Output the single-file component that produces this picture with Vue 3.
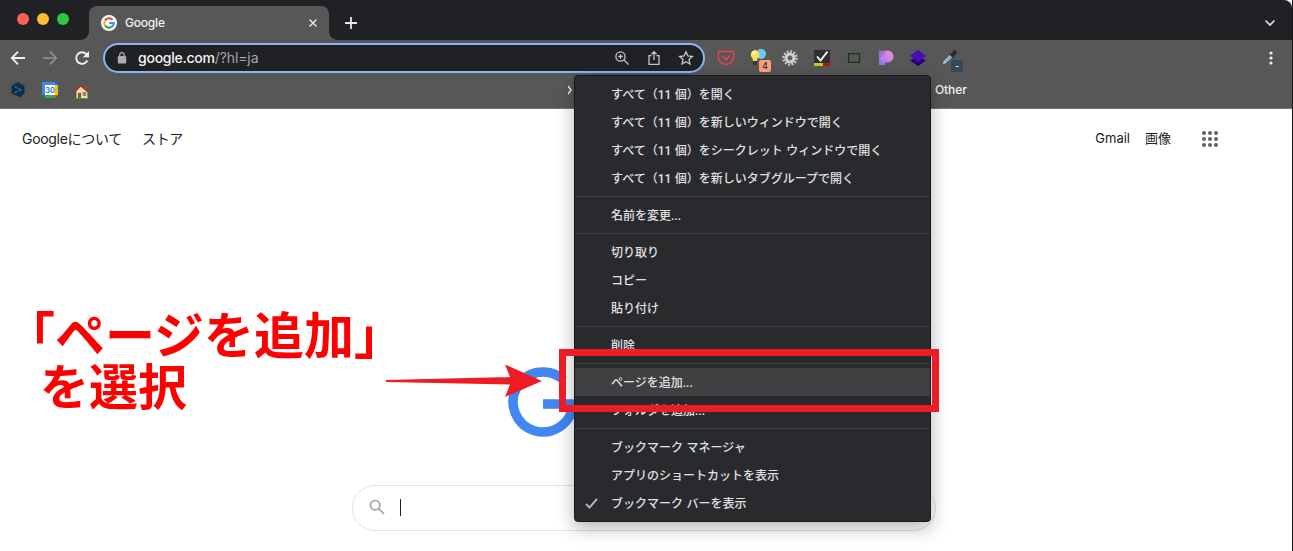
<template>
  <div class="browser">
    <header class="tab-strip">
      <div class="lights">
        <span class="light close"></span>
        <span class="light minimize"></span>
        <span class="light zoom"></span>
      </div>
      <div class="tab">
        <svg class="favicon" width="16" height="16" viewBox="0 0 16 16">
          <circle cx="8" cy="8" r="8" fill="#fff" />
          <g fill="none" stroke-width="2.1">
            <path d="M4 5.6A4.7 4.7 0 0 1 11.5 4.8" stroke="#ea4335" />
            <path d="M4 10.4A4.8 4.8 0 0 1 4 5.6" stroke="#fbbc05" />
            <path d="M11.2 11.5A4.8 4.8 0 0 1 4 10.4" stroke="#34a853" />
            <path d="M8.2 8H12.8A4.8 4.8 0 0 1 11.2 11.5" stroke="#4285f4" />
          </g>
        </svg>
        <span class="tab-title">Google</span>
        <svg width="8" height="8" viewBox="0 0 8 8" stroke="#e8e8e8" stroke-width="1.4">
          <path d="M.5 .5l7 7M7.500 .5l-7 7" />
        </svg>
      </div>
      <svg class="new-tab" width="12" height="12" viewBox="0 0 12 12" stroke="#e8eaed" stroke-width="1.8">
        <path d="M6 0v12M0 6h12" />
      </svg>
      <svg class="tab-search" width="12" height="8" viewBox="0 0 12 8" fill="none" stroke="#dee1e6" stroke-width="1.7">
        <path d="M1.500 1.500l4.500 4.500 4.500-4.500" />
      </svg>
    </header>

    <div class="toolbar">
      <div class="nav">
        <svg width="16" height="16" viewBox="0 0 16 16" fill="none" stroke="#f1f1f1" stroke-width="1.8">
          <path d="M15 8H2M8 1.700L1.800 8 8 14.300" />
        </svg>
        <svg width="16" height="16" viewBox="0 0 16 16" fill="none" stroke="#929292" stroke-width="1.7">
          <path d="M1 8h13M8 1.700L14.200 8 8 14.300" />
        </svg>
        <svg width="16" height="16" viewBox="0 0 16 16" fill="none" stroke="#f1f1f1" stroke-width="1.9">
          <path d="M13.300 10.500A5.800 5.800 0 1 1 12.400 4.200L14 6" />
          <path d="M15 1v6.200H8.800z" fill="#f1f1f1" stroke="none" />
        </svg>
      </div>
      <div class="omnibox">
        <svg class="lock" width="10" height="12" viewBox="0 0 10 12">
          <rect x=".8" y="4" width="8.400" height="7.500" rx="1" fill="#a9acb0" />
          <path d="M2.700 5V2.900a2.300 2.300 0 0 1 4.600 0V5" fill="none" stroke="#a9acb0" stroke-width="1.300" />
        </svg>
        <span class="url">google.com<span class="path">/?hl=ja</span></span>
        <div class="omni-actions">
          <svg width="16" height="16" viewBox="0 0 16 16" fill="none" stroke="#c4c7c9" stroke-width="1.3">
            <circle cx="6.500" cy="6.500" r="4.600" />
            <path d="M10 10l4.500 4.500M6.500 4.300v4.400M4.300 6.500h4.400" />
          </svg>
          <svg width="16" height="16" viewBox="0 0 16 16" fill="none" stroke="#c4c7c9" stroke-width="1.3">
            <path d="M5.500 5.700H3v8.600h10V5.700h-2.500M8 10V1.700M5.500 4.200L8 1.700l2.500 2.500" />
          </svg>
          <svg width="16" height="16" viewBox="0 0 16 16" fill="none" stroke="#c4c7c9" stroke-width="1.3">
            <path d="M8 1.800l1.900 4.200 4.500.5-3.400 3 1 4.500L8 11.700 4 14l1-4.500-3.400-3 4.500-.5z" />
          </svg>
        </div>
      </div>
      <div class="extensions">
        <svg width="20" height="20" viewBox="0 0 20 20" fill="none" stroke="#ef4056" stroke-width="1.5">
          <path d="M3.600 3.500h12.800q1.200 0 1.200 1.200v4.500a7.600 7.200 0 0 1-15.200 0V4.700q0-1.200 1.200-1.200z" />
          <path d="M6.500 8.200l3.500 3.400 3.500-3.400" stroke-linecap="round" stroke-linejoin="round" />
        </svg>
        <div class="ext">
          <svg width="20" height="20" viewBox="0 0 20 20">
            <circle cx="13" cy="6" r="5" fill="#70c9f2" />
            <path d="M6.500 2a4.800 4.800 0 0 1 3 8.500L8.800 13H5.200l-.8-2.800A4.700 4.700 0 0 1 6.500 2z" fill="#ffe04d" />
            <circle cx="6" cy="5" r="2" fill="#fff6ae" />
            <path d="M5 13h4v3l-2 2-2-2z" fill="#363636" />
          </svg>
          <span class="badge orange">4</span>
        </div>
        <svg width="20" height="20" viewBox="0 0 20 20">
          <circle cx="10" cy="10" r="6.600" fill="none" stroke="#c9c9c9" stroke-width="2.400" stroke-dasharray="1.850 1.600" />
          <circle cx="10" cy="10" r="4" fill="#777" stroke="#cfcfcf" stroke-width="3" />
          <circle cx="10" cy="10" r="1.800" fill="#5a5a5a" />
        </svg>
        <svg width="20" height="20" viewBox="0 0 20 20">
          <path d="M2 2h16v13H2z" fill="#303030" />
          <path d="M2 15h9v3H2z" fill="#b5d417" />
          <path d="M11 15h7v3h-7z" fill="#b51612" />
          <path d="M5 8.500l3.500 4L15.500 3.500" fill="none" stroke="#fff" stroke-width="1.800" />
        </svg>
        <svg width="20" height="20" viewBox="0 0 20 20" fill="none">
          <path d="M2.500 6V2.500H6M14 2.500h3.500V6M2.500 13.500V17H6M14 17h3.500v-3.500" stroke="#32752e" stroke-width="1.300" />
          <rect x="4.600" y="5.700" width="11" height="8.600" stroke="#292929" stroke-width="1.300" />
        </svg>
        <svg width="20" height="20" viewBox="0 0 20 20">
          <defs>
            <linearGradient id="p-fill" x1="0" y1="1" x2="1" y2="0">
              <stop offset="0" stop-color="#8178ed" />
              <stop offset=".55" stop-color="#ca83ed" />
              <stop offset="1" stop-color="#ff8fb8" />
            </linearGradient>
          </defs>
          <path d="M10.500 2.500h1a6 6 0 0 1 0 12H9v2.500H3V10z" fill="url(#p-fill)" />
          <path d="M3 8.500l6-6M3 5.800L6.300 2.500M3 3.200l.8-.8" stroke="#c886ef" stroke-width="1.100" />
        </svg>
        <svg width="20" height="20" viewBox="0 0 20 20">
          <path d="M2 12.500l8-4 8 4-8 5.500z" fill="#23007d" />
          <path d="M2 8l8-6 8 6-8 6z" fill="#4b09b7" />
        </svg>
        <div class="ext">
          <svg width="20" height="20" viewBox="0 0 20 20">
            <path d="M3.500 15.500l1-2.500 6-6 1.500 1.500-6 6z" fill="#64b2e8" stroke="#c5d8e5" />
            <path d="M9.500 5.500l4.500 4.500M11.500 6.500l3-4 2 1.500-3.500 4z" fill="#262b30" stroke="#262b30" stroke-width="1.500" />
          </svg>
          <span class="badge navy">-</span>
        </div>
      </div>
      <svg class="more" width="4" height="14" viewBox="0 0 4 14" fill="#f1f1f1">
        <circle cx="2" cy="2" r="1.600" /><circle cx="2" cy="7" r="1.600" /><circle cx="2" cy="12" r="1.600" />
      </svg>
    </div>

    <div class="bookmarks">
      <svg width="16" height="16" viewBox="0 0 16 16">
        <path d="M8 0l6.500 3.700v8.100l-3 1.800V16l-3.200-1.700L1.500 11.600V3.700z" fill="#0b2f4c" />
        <path d="M5.500 5l5 2.700-5 2.800" fill="none" stroke="#4d667c" stroke-width=".9" />
        <g fill="#5f788c"><circle cx="5.500" cy="5" r=".8" /><circle cx="10.500" cy="7.700" r=".9" /><circle cx="5.500" cy="10.500" r=".8" /></g>
      </svg>
      <svg width="16" height="16" viewBox="0 0 16 16">
        <path d="M0 0h13v3H3v10H0z" fill="#4285f4" />
        <path d="M13 0h3v3h-3z" fill="#1967d2" />
        <path d="M13 3h3v10h-3z" fill="#fbbc04" />
        <path d="M3 13h10v3H3z" fill="#34a853" />
        <path d="M0 13h3v3H0z" fill="#188038" />
        <path d="M13 13h3l-3 3z" fill="#ea4335" />
        <path d="M3 3h10v10H3z" fill="#fff" />
        <text x="8" y="10.800" text-anchor="middle" class="cal-day">30</text>
      </svg>
      <svg class="house" width="16" height="16" viewBox="0 0 16 16">
        <path d="M2.500 7L7 3.500l6.500 5V15.500h-11z" fill="#efd9ad" />
        <path d="M10.500 3h2v4h-2z" fill="#a54c35" />
        <path d="M.8 8.300L6.800 2.500l7.800 6.500" fill="none" stroke="#ad3029" stroke-width="1.800" />
        <path d="M4 10h3v5.500H4z" fill="#905022" />
        <path d="M9 9.500h3v3H9z" fill="#5ba3c8" stroke="#a46a3c" stroke-width=".7" />
        <path d="M1.500 15.500h13" stroke="#64903c" />
      </svg>
      <svg class="overflow" width="5" height="10" viewBox="0 0 5 10" fill="none" stroke="#eee" stroke-width="1.500">
        <path d="M0 1l3 4-3 4" />
      </svg>
      <span class="other">Other</span>
    </div>

    <main class="page">
      <nav class="top-links">
        <div class="about">
          <a>Googleについて</a>
          <a>ストア</a>
        </div>
        <div class="apps-links">
          <a>Gmail</a>
          <a>画像</a>
        </div>
        <div class="apps"><i v-for="n in 9" :key="n"></i></div>
      </nav>
      <div class="search">
        <svg width="17" height="17" viewBox="0 0 17 17" fill="none" stroke="#9aa0a6" stroke-width="1.700">
          <circle cx="6.200" cy="6.200" r="4.700" />
          <path d="M9.700 9.700l5.300 5.300" />
        </svg>
        <span class="caret"></span>
      </div>
    </main>

    <svg class="logo" width="80" height="80" viewBox="0 0 80 80">
      <path d="M63.500 20A30 30 0 1 0 73 44H43" fill="none" stroke="#4285f4" stroke-width="9.500" />
    </svg>

    <div class="menu">
      <div v-for="(group, index) in groups" :key="index" class="group">
        <div v-for="item in group" :key="item" class="item" :class="{ active: item === selected }">
          <svg v-if="item === checked" class="check" width="13" height="11" viewBox="0 0 13 11" fill="none" stroke="#b0b1b3" stroke-width="1.900">
            <path d="M1 6l3.500 3.500L12 1" />
          </svg>
          {{ item }}
        </div>
      </div>
    </div>

    <div class="note">
      <p>「ページを追加」</p>
      <p class="second">を選択</p>
    </div>
    <svg class="arrow" width="160" height="40" viewBox="0 0 160 40">
      <path d="M0 17L124 14 119 1.500 156 18 119 34 124 21.500 0 19z" fill="#ee1c24" />
    </svg>
    <div class="highlight"></div>
  </div>
</template>

<script setup>
const selected = 'ページを追加...'
const checked = 'ブックマーク バーを表示'

const groups = [
  [
    'すべて（11 個）を開く',
    'すべて（11 個）を新しいウィンドウで開く',
    'すべて（11 個）をシークレット ウィンドウで開く',
    'すべて（11 個）を新しいタブグループで開く'
  ],
  ['名前を変更...'],
  ['切り取り', 'コピー', '貼り付け'],
  ['削除'],
  [selected, 'フォルダを追加...'],
  ['ブックマーク マネージャ', 'アプリのショートカットを表示', checked]
]
</script>

<style>
body {
  margin: 0;
  background: #fff;
}
</style>

<style scoped>
.browser {
  position: relative;
  box-sizing: border-box;
  width: 1293px;
  height: 551px;
  overflow: hidden;
  border-right: 1px solid #151515;
  background: #fff;
  font-family: Inter, "Noto Sans CJK JP", sans-serif;
}

svg {
  display: block;
  flex: none;
}

.tab-strip {
  display: flex;
  align-items: center;
  height: 40px;
  background: #202124;
  border-top-right-radius: 8px;
}

.lights {
  display: flex;
  gap: 8px;
  width: 72px;
  padding-left: 17px;
  margin-top: -2px;
}

.light {
  width: 12px;
  height: 12px;
  border-radius: 50%;
}

.close { background: #ff5f57; }
.minimize { background: #febc2e; }
.zoom { background: #28c840; }

.tab {
  position: relative;
  box-sizing: border-box;
  display: flex;
  align-items: center;
  align-self: flex-end;
  width: 240px;
  height: 34px;
  padding: 0 12px;
  border-radius: 8px 8px 0 0;
  background: #575757;
}

.tab::before,
.tab::after {
  content: "";
  position: absolute;
  bottom: 0;
  width: 8px;
  height: 8px;
}

.tab::before {
  left: -8px;
  background: radial-gradient(circle at 0 0, transparent 7.5px, #575757 8px);
}

.tab::after {
  right: -8px;
  background: radial-gradient(circle at 8px 0, transparent 7.5px, #575757 8px);
}

.tab-title {
  flex: 1;
  margin: -2px 0 0 8px;
  color: #f1f1f1;
  font-size: 12px;
  font-weight: 500;
  letter-spacing: -0.2px;
}

.new-tab {
  margin: 6px 0 0 16px;
}

.tab-search {
  margin: 6px 16px 0 auto;
}

.toolbar {
  display: flex;
  align-items: center;
  height: 36px;
  padding-left: 10px;
  background: #575757;
}

.nav {
  display: flex;
  gap: 16px;
}

.omnibox {
  box-sizing: border-box;
  display: flex;
  align-items: center;
  width: 602px;
  height: 30px;
  margin-left: 13px;
  padding: 0 9px 0 12px;
  border: 2px solid #8ab4f8;
  border-radius: 15px;
  background: #202124;
}

.url {
  flex: 1;
  margin: -2px 0 0 11px;
  color: #f4f4f4;
  font-size: 14px;
  font-weight: 500;
  letter-spacing: -0.25px;
}

.path {
  color: #a2a5a9;
  font-weight: 400;
  letter-spacing: -0.1px;
}

.omni-actions {
  display: flex;
  gap: 16px;
}

.extensions {
  display: flex;
  gap: 12px;
  margin-left: 11px;
}

.ext {
  position: relative;
}

.badge {
  position: absolute;
  left: 11px;
  top: 12px;
  width: 12px;
  height: 12px;
  border-radius: 2px;
  font-size: 9px;
  font-weight: 500;
  line-height: 12px;
  text-align: center;
}

.orange {
  background: #ffa07a;
  color: #333;
}

.navy {
  background: #34495e;
  color: #eee;
}

.more {
  margin: 0 19px 0 auto;
}

.bookmarks {
  box-sizing: border-box;
  display: flex;
  align-items: center;
  gap: 16px;
  height: 33px;
  padding: 0 0 5px 10px;
  border-bottom: 1px solid #767676;
  background: #575757;
}

.cal-day {
  fill: #1967d2;
  font-size: 7.5px;
  font-weight: 600;
}

.house {
  margin-top: 2px;
}

.overflow {
  margin-left: 462px;
}

.other {
  margin-left: 346px;
  color: #f1f1f1;
  font-size: 12px;
  font-weight: 500;
  letter-spacing: -0.1px;
}

.top-links {
  display: flex;
  align-items: center;
  height: 60px;
  padding: 0 74px 0 22px;
  color: #202124;
  font-size: 13px;
}

.about,
.apps-links {
  display: flex;
  align-items: baseline;
  gap: 20px;
  margin-top: -2px;
  font-size: 14px;
  letter-spacing: -0.3px;
}

.apps-links {
  gap: 15px;
  margin: -3px 0 0 auto;
  font-size: 13px;
  letter-spacing: 0;
}

.apps {
  display: grid;
  grid-template-columns: repeat(3, 4px);
  gap: 2px;
  margin-left: 31px;
}

.apps i {
  width: 4px;
  height: 4px;
  border-radius: 50%;
  background: #5f6368;
}

.search {
  box-sizing: border-box;
  display: flex;
  align-items: center;
  width: 584px;
  height: 46px;
  margin: 316px 0 0 352px;
  padding: 0 0 1px 16px;
  border: 1px solid #dfe1e5;
  border-radius: 23px;
}

.caret {
  width: 1px;
  height: 17px;
  margin-left: 14px;
  background: #202124;
}

.logo {
  position: absolute;
  left: 500px;
  top: 360px;
}

.menu {
  position: absolute;
  left: 574px;
  top: 75px;
  box-sizing: border-box;
  width: 357px;
  padding: 4px 0;
  border: 1px solid #18191b;
  border-radius: 4px;
  background: #292a2d;
  box-shadow: 0 6px 18px rgba(0, 0, 0, 0.3);
}

.group + .group {
  margin-top: 4px;
  padding-top: 4px;
  border-top: 1px solid #3d4043;
}

.item {
  position: relative;
  height: 28px;
  padding-left: 36px;
  color: #e0e1e3;
  font-family: Roboto, "Noto Sans CJK JP", sans-serif;
  font-size: 12px;
  font-weight: 500;
  line-height: 30px;
  white-space: nowrap;
  word-spacing: 0.5px;
}

.active {
  background: #3f4042;
}

.check {
  position: absolute;
  left: 10px;
  top: 9px;
}

.note {
  position: absolute;
  left: 5px;
  top: 306px;
  color: #f00;
  font-family: "Noto Sans CJK JP", sans-serif;
  font-size: 50px;
  font-weight: 700;
  line-height: 52px;
  white-space: nowrap;
}

.note p {
  margin: 0;
}

.note .second {
  padding-left: 35px;
  font-size: 49px;
}

.arrow {
  position: absolute;
  left: 386px;
  top: 363px;
}

.highlight {
  position: absolute;
  left: 559px;
  top: 349px;
  box-sizing: border-box;
  width: 380px;
  height: 63px;
  border: 7px solid #ee1c24;
}
</style>
